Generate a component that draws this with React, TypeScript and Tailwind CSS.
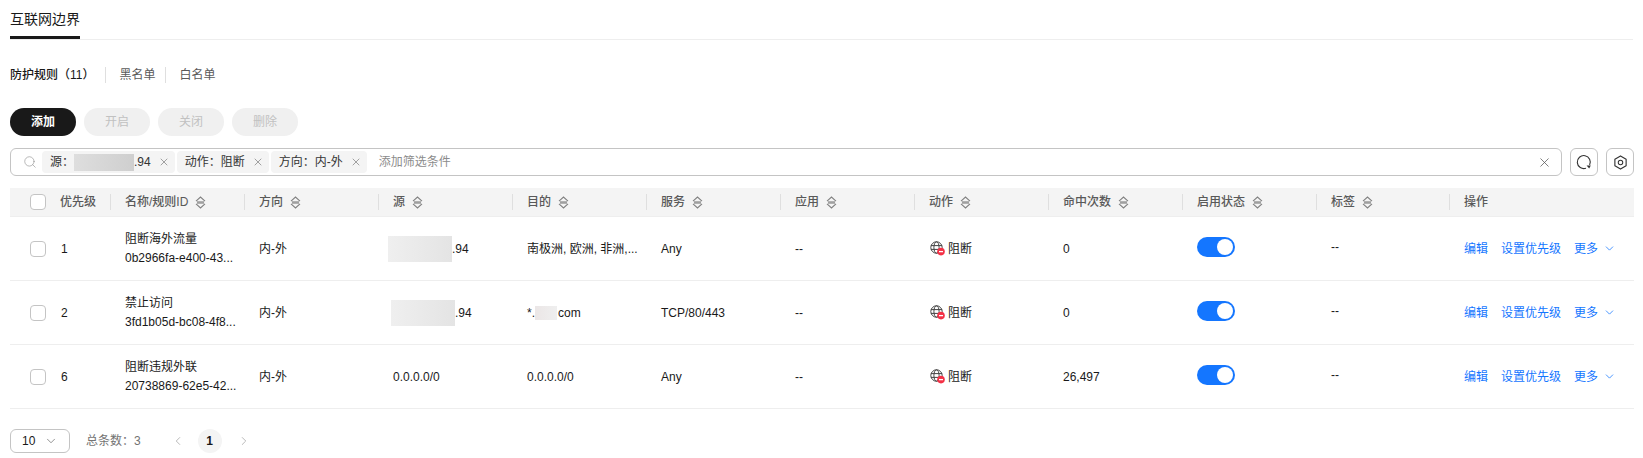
import { ChevronDown, ChevronLeft, ChevronRight, Search, X } from 'lucide-react';

const FONT = "font-['Liberation_Sans','Noto_Sans_CJK_SC',sans-serif]";
const GRID = 'grid grid-cols-[101px_134px_134px_134px_134px_134px_134px_134px_134px_134px_133px_1fr]';

const columns = [
  { title: '名称/规则ID', sort: true },
  { title: '方向', sort: true },
  { title: '源', sort: true },
  { title: '目的', sort: true },
  { title: '服务', sort: true },
  { title: '应用', sort: true },
  { title: '动作', sort: true },
  { title: '命中次数', sort: true },
  { title: '启用状态', sort: true },
  { title: '标签', sort: true },
  { title: '操作', sort: false },
];

const rows = [
  { priority: '1', name: '阻断海外流量', id: '0b2966fa-e400-43...', source: 'blurA', dest: '南极洲, 欧洲, 非洲,...', service: 'Any', hits: '0' },
  { priority: '2', name: '禁止访问', id: '3fd1b05d-bc08-4f8...', source: 'blurB', dest: 'blur', service: 'TCP/80/443', hits: '0' },
  { priority: '6', name: '阻断违规外联', id: '20738869-62e5-42...', source: '0.0.0.0/0', dest: '0.0.0.0/0', service: 'Any', hits: '26,497' },
];

function SortIcon() {
  return (
    <svg width="11" height="13" viewBox="0 0 11 13" className="ml-[7px] shrink-0">
      <path d="M2 5.2h7v2.6H2z" fill="#a0a0a0" />
      <path d="M1 5.2 5.5 1 10 5.2M1 7.8 5.5 12 10 7.8" fill="none" stroke="#808080" strokeWidth="1.1" />
    </svg>
  );
}

function Checkbox() {
  return <span className="block h-4 w-4 rounded-[4px] border border-[#c4c4c4] bg-white" />;
}

function BlockIcon() {
  return (
    <svg width="15" height="15" viewBox="0 0 15 15" className="shrink-0">
      <g fill="none" stroke="#444" strokeWidth="1">
        <circle cx="6.5" cy="6.5" r="5.7" />
        <ellipse cx="6.5" cy="6.5" rx="2.6" ry="5.7" />
        <path d="M1 4.6h11M1 8.4h11" />
      </g>
      <circle cx="11" cy="10.6" r="3.8" fill="#f43146" />
      <path d="M9 10.6h4" stroke="#fff" strokeWidth="1.3" />
    </svg>
  );
}

function RefreshIcon() {
  return (
    <svg width="16" height="16" viewBox="0 0 16 16" fill="none" className="shrink-0">
      <path d="M13.6 11A6.5 6.5 0 1 0 10 14.2" stroke="#333" strokeWidth="1.1" />
      <path d="M10.6 11.6h4.2l-1.6 3z" fill="#333" />
    </svg>
  );
}

function GearIcon() {
  return (
    <svg width="15" height="15" viewBox="0 0 16 16" fill="none" className="shrink-0">
      <path d="M8 1 14 4.5v7L8 15 2 11.5v-7z" stroke="#333" strokeWidth="1.2" strokeLinejoin="round" />
      <circle cx="8" cy="8" r="2.4" stroke="#333" strokeWidth="1.1" />
    </svg>
  );
}

function Toggle() {
  return (
    <span className="flex h-5 w-[38px] items-center justify-end rounded-full bg-[#1476ff] px-[2px]">
      <span className="h-4 w-4 rounded-full bg-white" />
    </span>
  );
}

function Chip({ label, value }: { label: string; value?: React.ReactNode }) {
  return (
    <span className="flex h-[22px] items-center rounded-[4px] bg-[#f4f4f4] pl-2 pr-[5px] text-[12px] text-[#333]">
      {label}
      {value}
      <X size={12} strokeWidth={1.2} className="ml-[7px] text-[#666]" />
    </span>
  );
}

function PillButton({ label, primary }: { label: string; primary?: boolean }) {
  return (
    <button
      className={`h-7 w-[66px] rounded-full text-[12px] ${
        primary ? 'bg-[#191919] font-bold text-white' : 'bg-[#f0f0f0] text-[#c1c1c1]'
      }`}
    >
      {label}
    </button>
  );
}

export default function App() {
  return (
    <div className={`${FONT} h-[458px] w-[1643px] overflow-hidden bg-white px-[10px] text-[12px] text-[#191919]`}>
      {/* tabs */}
      <div className="h-10 border-b border-[#eeeeee]">
        <div className="flex h-[39px] w-[70px] items-start border-b-[3px] border-[#191919] pt-[10px] text-[14px] leading-[18px]">
          互联网边界
        </div>
      </div>

      {/* sub nav */}
      <div className="mt-[27px] flex h-4 items-center">
        <span className="font-medium text-[#191919]">{'防护规则\uFF0811\uFF09'}</span>
        <span className="ml-[11px] h-4 w-px bg-[#dfdfdf]" />
        <span className="ml-[13px] text-[#595959]">黑名单</span>
        <span className="ml-[10px] h-4 w-px bg-[#dfdfdf]" />
        <span className="ml-[13px] text-[#595959]">白名单</span>
      </div>

      {/* buttons */}
      <div className="mt-[25px] flex gap-2">
        <PillButton label="添加" primary />
        <PillButton label="开启" />
        <PillButton label="关闭" />
        <PillButton label="删除" />
      </div>

      {/* search */}
      <div className="mt-3 flex w-[1624px] gap-2">
        <div className="flex h-7 flex-1 items-center rounded-[6px] border border-[#c4c4c4] pl-3 pr-[9px]">
          <Search size={14} strokeWidth={1} className="text-[#888]" />
          <div className="ml-[5px] flex gap-[2px]">
            <Chip
              label={'源\uFF1A'}
              value={
                <>
                  <span className="h-[17px] w-[60px] bg-gradient-to-r from-[#dedede] to-[#cfcfcf]" />
                  <span>.94</span>
                </>
              }
            />
            <Chip label={'动作\uFF1A阻断'} />
            <Chip label={'方向\uFF1A内-外'} />
          </div>
          <span className="ml-3 flex-1 text-[#8c8c8c]">添加筛选条件</span>
          <X size={15} strokeWidth={1.2} className="text-[#555]" />
        </div>
        <button className="flex h-7 w-7 items-center justify-center rounded-[6px] border border-[#c4c4c4]">
          <RefreshIcon />
        </button>
        <button className="flex h-7 w-7 items-center justify-center rounded-[6px] border border-[#c4c4c4]">
          <GearIcon />
        </button>
      </div>

      {/* table */}
      <div className="mt-3 w-[1624px]">
        <div className={`${GRID} h-[29px] items-center border-b border-[#eeeeee] bg-[#f4f4f4] font-medium text-[#595959]`}>
          <div className="flex h-4 items-center border-r border-[#dfdfdf] pl-5">
            <Checkbox />
            <span className="ml-[14px]">优先级</span>
          </div>
          {columns.map((col, i) => (
            <div
              key={col.title}
              className={`flex h-4 items-center pl-[14px] ${i < columns.length - 1 ? 'border-r border-[#dfdfdf]' : ''}`}
            >
              {col.title}
              {col.sort && <SortIcon />}
            </div>
          ))}
        </div>

        {rows.map((row) => (
          <div key={row.priority} className={`${GRID} h-16 items-center border-b border-[#eeeeee]`}>
            <div className="flex items-center pl-5">
              <Checkbox />
              <span className="ml-[15px]">{row.priority}</span>
            </div>
            <div className="pl-[14px] leading-[19px]">
              <div>{row.name}</div>
              <div className="whitespace-nowrap">{row.id}</div>
            </div>
            <div className="pl-[14px]">内-外</div>
            <div className="pl-[14px]">
              {row.source === 'blurA' || row.source === 'blurB' ? (
                <div className="flex items-center">
                  <span
                    className={`h-[26px] w-[64px] bg-gradient-to-r from-[#efefef] to-[#e4e4e4] ${
                      row.source === 'blurA' ? 'ml-[-5px]' : 'ml-[-2px]'
                    }`}
                  />
                  <span>.94</span>
                </div>
              ) : (
                row.source
              )}
            </div>
            <div className="whitespace-nowrap pl-[14px]">
              {row.dest === 'blur' ? (
                <div className="flex items-center">
                  *.
                  <span className="h-[14px] w-[22px] bg-gradient-to-r from-[#ebe6e6] to-[#efefef]" />
                  <span className="ml-[1px]">com</span>
                </div>
              ) : (
                row.dest
              )}
            </div>
            <div className="pl-[14px]">{row.service}</div>
            <div className="pl-[14px]">--</div>
            <div className="flex items-center pl-[15px]">
              <BlockIcon />
              <span className="ml-[3px]">阻断</span>
            </div>
            <div className="pl-[14px]">{row.hits}</div>
            <div className="mb-1 pl-[14px]">
              <Toggle />
            </div>
            <div className="mb-1 pl-[14px]">--</div>
            <div className="flex items-center pl-[14px] text-[#1476ff]">
              <span>编辑</span>
              <span className="ml-[13px]">设置优先级</span>
              <span className="ml-[13px]">更多</span>
              <ChevronDown size={13} strokeWidth={1.4} className="ml-[5px] text-[#1476ff]" />
            </div>
          </div>
        ))}
      </div>

      {/* pagination */}
      <div className="mt-[20px] flex h-6 items-center">
        <div className="flex h-6 w-[60px] items-center justify-between rounded-[6px] border border-[#c4c4c4] pl-[11px] pr-[11px]">
          <span>10</span>
          <ChevronDown size={14} strokeWidth={1.2} className="text-[#666]" />
        </div>
        <span className="ml-4 text-[#737373]">{'总条数\uFF1A3'}</span>
        <ChevronLeft size={14} strokeWidth={1.4} className="ml-[30px] text-[#aaaaaa]" />
        <span className="ml-[13px] flex h-6 w-6 items-center justify-center rounded-full bg-[#f4f4f4] font-bold">1</span>
        <ChevronRight size={14} strokeWidth={1.4} className="ml-[15px] text-[#aaaaaa]" />
      </div>
    </div>
  );
}
